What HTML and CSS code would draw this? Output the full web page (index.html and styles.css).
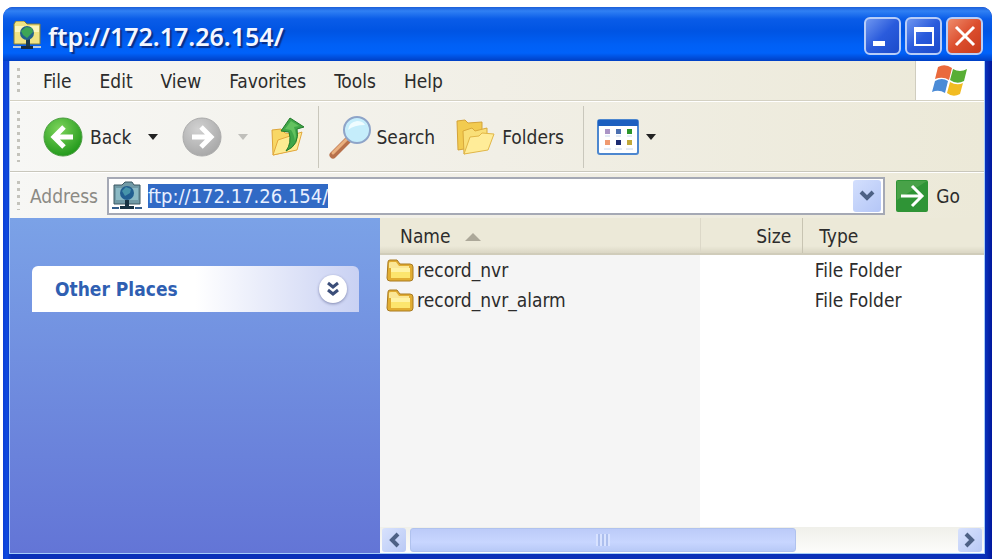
FILE: index.html
```
<!DOCTYPE html>
<html lang="en">
<head>
    <meta charset="UTF-8">
    <meta name="viewport" content="width=device-width, initial-scale=1.0">
    <title>ftp://172.17.26.154/</title>
    <link rel="stylesheet" href="styles.css">
</head>
<body>
    <div class="window">
        <header class="titlebar">
            <svg class="title-icon" width="28" height="30" viewBox="0 0 28 30">
                <path d="M1 3l2-3h8l3 3h13v20H1z" fill="#f0e384" stroke="#85803a"/>
                <path d="M2 5h24v6H2z" fill="#fbf6bd"/>
                <path d="M13 18h4v7h-4z" fill="#1b3a4a"/>
                <circle cx="14" cy="12" r="7" fill="#23628a"/>
                <path d="M8 10l5-4 6 1 1 4-6 6-4-3z" fill="#3da556"/>
                <path d="M0 26h28" stroke="#b7cbe0" stroke-width="2"/>
                <path d="M8 25h12v3H8z" fill="#182c40"/>
            </svg>
            <h1>ftp://172.17.26.154/</h1>
            <div class="window-buttons">
                <button type="button" class="win-btn" aria-label="Minimize">
                    <svg width="36" height="36" viewBox="0 0 36 36"><path d="M8 23h12v5H8z" fill="#fff"/></svg>
                </button>
                <button type="button" class="win-btn" aria-label="Maximize">
                    <svg width="36" height="36" viewBox="0 0 36 36"><path d="M9 12h18v15H9z" fill="none" stroke="#fff" stroke-width="2"/><path d="M8 9h20v5H8z" fill="#fff"/></svg>
                </button>
                <button type="button" class="win-btn close" aria-label="Close">
                    <svg width="36" height="36" viewBox="0 0 36 36"><path d="M9 9l18 18M27 9L9 27" stroke="#fff" stroke-width="3"/></svg>
                </button>
            </div>
        </header>

        <div class="client">
            <nav class="menubar">
                <span class="grip"></span>
                <div class="menus">
                    <button type="button">File</button>
                    <button type="button">Edit</button>
                    <button type="button">View</button>
                    <button type="button">Favorites</button>
                    <button type="button">Tools</button>
                    <button type="button">Help</button>
                </div>
                <div class="flag">
                    <svg width="36" height="34" viewBox="0 0 36 34">
                        <path d="M6 3q7-4 14 1l-3 12q-6-4-14-1z" fill="#ea6a3c"/>
                        <path d="M21 5q7 4 14 0l-3 12q-7 4-14-1z" fill="#58ae35"/>
                        <path d="M3 17q7-4 13 0l-3 12Q7 25 0 28z" fill="#4b8bd6"/>
                        <path d="M18 18q7 4 13 1l-3 11q-7 4-13-1z" fill="#f2bc22"/>
                    </svg>
                </div>
            </nav>

            <div class="toolbar">
                <span class="grip"></span>
                <button type="button" class="tool back">
                    <svg width="40" height="40" viewBox="0 0 40 40">
                        <defs>
                            <radialGradient id="green" cx="0.4" cy="0.3" r="0.7"><stop offset="0" stop-color="#7ed45c"/><stop offset="1" stop-color="#239a1c"/></radialGradient>
                            <radialGradient id="gray" cx="0.4" cy="0.3" r="0.7"><stop offset="0" stop-color="#d2d2d2"/><stop offset="1" stop-color="#a9a9a9"/></radialGradient>
                        </defs>
                        <circle cx="20" cy="20" r="19" fill="url(#green)" stroke="#4a9c40"/>
                        <path d="M30 20H12M21 10L11 20l10 10" fill="none" stroke="#fff" stroke-width="5"/>
                    </svg>
                    Back
                </button>
                <button type="button" class="arrow-btn" aria-label="Back history"><span class="arrow"></span></button>
                <button type="button" class="tool forward" aria-label="Forward" disabled>
                    <svg width="40" height="40" viewBox="0 0 40 40">
                        <circle cx="20" cy="20" r="19" fill="url(#gray)" stroke="#aaa"/>
                        <path d="M10 20h18M19 10l10 10-10 10" fill="none" stroke="#fff" stroke-width="5"/>
                    </svg>
                </button>
                <button type="button" class="arrow-btn" aria-label="Forward history" disabled><span class="arrow"></span></button>
                <button type="button" class="tool up" aria-label="Up">
                    <svg width="36" height="40" viewBox="0 0 36 40">
                        <path d="M2 13l9-1 4 4 9 1v16L3 38z" fill="#f8d765" stroke="#dda53a"/>
                        <path d="M3 38l5-15 24-8-5 18z" fill="#fdeb92" stroke="#e3a83d"/>
                        <path d="M16 34q6-8 3-19l-8-1L20 1l14 9-7 2q3 16-11 22z" fill="#3fa648" stroke="#237b2b"/>
                        <path d="M15 12l6-8 8 5-5 1q3 8 1 14-1-7-4-11z" fill="#63c25f"/>
                    </svg>
                </button>
                <span class="separator"></span>
                <button type="button" class="tool search">
                    <svg width="44" height="44" viewBox="0 0 44 44">
                        <path d="M4 40l15-15" stroke="#b8714b" stroke-width="7" stroke-linecap="round"/>
                        <path d="M4 38l14-14" stroke="#eab07f" stroke-width="3" stroke-linecap="round"/>
                        <circle cx="28" cy="15" r="13" fill="#c5edfb" stroke="#8ea4c8" stroke-width="2"/>
                        <path d="M19 15q1-8 9-9 6 0 8 4-11 0-17 5z" fill="#effcff"/>
                    </svg>
                    Search
                </button>
                <button type="button" class="tool folders">
                    <svg width="40" height="38" viewBox="0 0 40 38">
                        <path d="M2 3l8-1 3 3 14-1v24L3 32z" fill="#f2cb50" stroke="#d4a339"/>
                        <path d="M8 13l9-3 3 3 12-3v18L9 36z" fill="#f9df78" stroke="#d9a93b"/>
                        <path d="M9 36l6-17 9-1 3-3 12 1-6 16z" fill="#ffec98" stroke="#e1b647"/>
                    </svg>
                    Folders
                </button>
                <span class="separator last"></span>
                <button type="button" class="tool views" aria-label="Views">
                    <svg width="42" height="36" viewBox="0 0 42 36">
                        <rect x="1" y="1" width="40" height="34" rx="2" fill="#fff" stroke="#4d87cf" stroke-width="2"/>
                        <path d="M1 1h40v6H1z" fill="#1c5fc0"/>
                        <path d="M8 10h5v5H8z" fill="#aa94c6"/>
                        <path d="M19 10h5v5h-5z" fill="#4b6fb0"/>
                        <path d="M30 10h5v5h-5z" fill="#2b952b"/>
                        <path d="M8 21h5v5H8z" fill="#f09a70"/>
                        <path d="M19 21h5v5h-5z" fill="#1d2c72"/>
                        <path d="M30 21h5v5h-5z" fill="#c0a83a"/>
                        <path d="M7 30h7M18 30h7M29 30h7M8 17h5M19 17h5M30 17h5" stroke="#c8d8ee"/>
                    </svg>
                    <span class="arrow"></span>
                </button>
            </div>

            <form class="addressbar">
                <span class="grip"></span>
                <label for="address">Address</label>
                <div class="combo">
                    <svg width="30" height="30" viewBox="0 0 30 30">
                        <path d="M2 4h8l3-3h7l2 3h6v19H2z" fill="#719aa6" stroke="#3d5963"/>
                        <path d="M4 7h22v12H4z" fill="#8bbac5"/>
                        <circle cx="15" cy="12" r="7" fill="#225f91"/>
                        <path d="M10 10l4-4 5 2-1 4-5 3z" fill="#4694aa"/>
                        <path d="M13 19h4v6h-4zM8 25h14v3H8z" fill="#183343"/>
                        <path d="M0 27h7M23 27h7" stroke="#345d8b" stroke-width="2"/>
                    </svg>
                    <input type="text" id="address" value="ftp://172.17.26.154/" autocomplete="off" spellcheck="false">
                    <button type="button" class="drop" aria-label="Show addresses">
                        <svg width="16" height="12" viewBox="0 0 16 12"><path d="M2 2l6 6 6-6" fill="none" stroke="#4d6185" stroke-width="4"/></svg>
                    </button>
                </div>
                <button type="submit" class="go">
                    <svg width="32" height="32" viewBox="0 0 32 32">
                        <rect width="32" height="32" rx="2" fill="#2f9436"/>
                        <path d="M1 1h30L1 20z" fill="#48a248"/>
                        <path d="M5 16h19M16 6l10 10-10 10" fill="none" stroke="#fff" stroke-width="3"/>
                    </svg>
                    Go
                </button>
            </form>

            <main class="content">
                <aside class="sidebar">
                    <section class="panel">
                        <h2>Other Places</h2>
                        <button type="button" class="expand" aria-label="Expand Other Places">
                            <svg width="14" height="16" viewBox="0 0 14 16"><path d="M2 2l5 4 5-4M2 9l5 4 5-4" fill="none" stroke="#3b4e79" stroke-width="3"/></svg>
                        </button>
                    </section>
                </aside>
                <section class="files">
                    <div class="list">
                        <table>
                            <thead>
                                <tr>
                                    <th class="name">Name <span class="sort"></span></th>
                                    <th class="size">Size</th>
                                    <th class="type">Type</th>
                                </tr>
                            </thead>
                            <tbody>
                                <tr>
                                    <td class="name">
                                        <svg width="28" height="24" viewBox="0 0 28 24">
                                            <path d="M2 4q0-2 2-2h7l3 4h10q3 0 3 3v11q0 3-3 3H4q-3 0-3-3z" fill="#e1ad32" stroke="#a97a21"/>
                                            <path d="M3 5q0-1 2-1h5l3 4h10v2H3z" fill="#fbe795"/>
                                            <path d="M5 10h19v10H5z" fill="#fce56d"/>
                                            <path d="M5 10h19v4H5z" fill="#fff3a4"/>
                                        </svg>record_nvr
                                    </td>
                                    <td class="size"></td>
                                    <td class="type">File Folder</td>
                                </tr>
                                <tr>
                                    <td class="name">
                                        <svg width="28" height="24" viewBox="0 0 28 24">
                                            <path d="M2 4q0-2 2-2h7l3 4h10q3 0 3 3v11q0 3-3 3H4q-3 0-3-3z" fill="#e1ad32" stroke="#a97a21"/>
                                            <path d="M3 5q0-1 2-1h5l3 4h10v2H3z" fill="#fbe795"/>
                                            <path d="M5 10h19v10H5z" fill="#fce56d"/>
                                            <path d="M5 10h19v4H5z" fill="#fff3a4"/>
                                        </svg>record_nvr_alarm
                                    </td>
                                    <td class="size"></td>
                                    <td class="type">File Folder</td>
                                </tr>
                            </tbody>
                        </table>
                    </div>
                    <div class="scrollbar">
                        <button type="button" class="scroll-btn" aria-label="Scroll left">
                            <svg width="12" height="16" viewBox="0 0 12 16"><path d="M10 2L4 8l6 6" fill="none" stroke="#4d6185" stroke-width="4"/></svg>
                        </button>
                        <div class="track">
                            <div class="thumb"><span class="ridges"></span></div>
                        </div>
                        <button type="button" class="scroll-btn" aria-label="Scroll right">
                            <svg width="12" height="16" viewBox="0 0 12 16"><path d="M2 2l6 6-6 6" fill="none" stroke="#4d6185" stroke-width="4"/></svg>
                        </button>
                    </div>
                </section>
            </main>
        </div>
    </div>

    <script>
        // the address is selected when the window opens
        var address = document.getElementById('address');
        address.focus();
        address.select();
    </script>
</body>
</html>
```
FILE: styles.css
```
* {
    box-sizing: border-box;
}

body {
    font-family: "DejaVu Sans Condensed", "DejaVu Sans", sans-serif;
    font-size: 19px;
    color: #2c2c2c;
    margin: 0;
    padding: 7px 0 0 3px;
    min-height: 100vh;
    display: flex;
    background-color: #fff;
}

button {
    font: inherit;
    color: inherit;
    background: none;
    border: none;
    padding: 0;
}

svg {
    display: block;
    flex: none;
}

.window {
    flex: 1;
    display: flex;
    flex-direction: column;
    padding: 0 7px 5px 6px;
    border-radius: 10px 10px 0 0;
    background: linear-gradient(to right, #0a3fd6, #0f4adf 4px, #0a30b8 8px, #0a30b8 calc(100% - 6px), #00179c);
    overflow: hidden;
}

/* title bar */
.titlebar {
    display: flex;
    align-items: center;
    height: 54px;
    margin: 0 -7px 0 -6px;
    padding: 4px 9px 0 10px;
    background: linear-gradient(#1d5fd8, #3080f4 4px, #0a5ce8 12px, #0054e3 24px, #0060f6 38px, #0062fa 46px, #003fc4);
}

.titlebar h1 {
    flex: 1;
    margin: 0 0 0 7px;
    font-family: "Noto Sans", sans-serif;
    font-size: 25px;
    font-weight: 600;
    line-height: 32px;
    color: #f4f7ff;
    text-shadow: 2px 2px 1px #0a2f87;
}

.window-buttons {
    display: flex;
    gap: 4px;
}

.win-btn {
    width: 37px;
    height: 38px;
    border: 2px solid #b8cdf8;
    border-radius: 6px;
    background: linear-gradient(135deg, #6e96f0, #2a5bdc 50%, #1c4bcb);
    display: flex;
    align-items: center;
    justify-content: center;
}

.win-btn.close {
    background: linear-gradient(135deg, #ee8c6c, #dc4e2e 50%, #c83a1c);
}

/* bars */
.client {
    flex: 1;
    display: flex;
    flex-direction: column;
    border: 1px solid #a5cdfa;
    border-top: none;
    background-color: #ece9d8;
}

.menubar,
.toolbar,
.addressbar {
    display: flex;
    align-items: center;
    background: linear-gradient(to right, #f7f7f5, #f1efe6 50%, #ece9d8);
}

.grip {
    width: 3px;
    margin-left: 7px;
    align-self: stretch;
    background: repeating-linear-gradient(#c4c3bc 0 3px, transparent 3px 7px);
}

.menubar {
    height: 40px;
    border-bottom: 1px solid #d4d1c3;
}

.menubar .grip {
    margin-top: 7px;
    margin-bottom: 7px;
}

.menus {
    flex: 1;
    display: flex;
    gap: 28px;
    padding-left: 23px;
}

.flag {
    align-self: stretch;
    width: 69px;
    display: flex;
    align-items: center;
    justify-content: center;
    background-color: #fff;
    border-left: 1px solid #d0cdbf;
}

.toolbar {
    height: 71px;
    border-top: 1px solid #fff;
    border-bottom: 1px solid #c9c7bc;
}

.toolbar .grip {
    margin-top: 9px;
    margin-bottom: 9px;
}

.tool {
    display: flex;
    align-items: center;
    gap: 7px;
}

.back {
    margin-left: 23px;
}

.forward {
    margin-left: 24px;
}

.up {
    margin-left: 22px;
}

.search {
    gap: 4px;
}

.folders {
    margin-left: 20px;
}

.arrow {
    display: block;
    border: 5px solid transparent;
    border-top: 6px solid #222;
    border-bottom: none;
}

.arrow-btn {
    margin-left: 16px;
}

.arrow-btn:disabled {
    opacity: 0.25;
}

.separator {
    width: 1px;
    height: 62px;
    margin: 0 10px 0 12px;
    background-color: #c9c7bc;
}

.separator.last {
    margin: 0 13px 0 19px;
}

.addressbar {
    height: 46px;
    padding-right: 24px;
    border-top: 1px solid #fff;
}

.addressbar .grip {
    margin-top: 8px;
    margin-bottom: 8px;
}

.addressbar label {
    margin: 0 9px 0 10px;
    color: #8b8a84;
}

.combo {
    flex: 1;
    display: flex;
    align-items: center;
    height: 38px;
    padding: 0 2px 0 3px;
    border: 2px solid #a5a9b5;
    background-color: #fff;
}

.combo input {
    flex: 1;
    min-width: 0;
    height: 24px;
    margin-left: 6px;
    padding: 0;
    border: none;
    outline: none;
    font: inherit;
    font-size: 20px;
    color: #222;
    caret-color: transparent;
}

.combo input::selection {
    background-color: #316ac5;
    color: #e8f0ff;
}

.drop {
    width: 28px;
    height: 32px;
    display: flex;
    align-items: center;
    justify-content: center;
    border-radius: 3px;
    background: linear-gradient(135deg, #d3dffd, #b4c6f6);
}

.go {
    display: flex;
    align-items: center;
    gap: 8px;
    margin-left: 11px;
}

/* side panel */
.content {
    flex: 1;
    display: flex;
}

.sidebar {
    width: 38%;
    padding: 48px 21px 0 22px;
    background: linear-gradient(#7ba2e7, #6375d6);
}

.panel {
    display: flex;
    align-items: center;
    height: 46px;
    padding: 0 12px 0 23px;
    border-radius: 6px 6px 0 0;
    background: linear-gradient(to right, #fff 50%, #c9d1f3);
}

.panel h2 {
    flex: 1;
    margin: 0;
    font-size: 19px;
    line-height: 24px;
    color: #2f5fb2;
}

.expand {
    width: 28px;
    height: 28px;
    display: flex;
    align-items: center;
    justify-content: center;
    border-radius: 50%;
    background-color: #fff;
    box-shadow: 0 1px 3px #8088b0;
}

/* file list */
.files {
    flex: 1;
    display: flex;
    flex-direction: column;
}

.list {
    flex: 1;
    background: linear-gradient(to right, #f5f5f5 53%, #fff 53%);
}

table {
    width: 100%;
    table-layout: fixed;
    border-collapse: collapse;
}

th {
    height: 36px;
    padding: 0;
    font-weight: normal;
    text-align: left;
    background: linear-gradient(#ece9d8 28px, #dad6c4);
    border-bottom: 2px solid #d0ccba;
}

td {
    height: 30px;
    padding: 0;
    white-space: nowrap;
}

th.name {
    width: 53%;
    padding-left: 20px;
}

td.name {
    display: flex;
    align-items: center;
    gap: 3px;
    padding-left: 6px;
}

th.size {
    width: 17%;
    padding-right: 11px;
    text-align: right;
    border-left: 1px solid #dcd8c8;
    border-right: 1px solid #c8c4b2;
}

th.type {
    padding-left: 16px;
}

td.type {
    padding-left: 12px;
}

.sort {
    display: inline-block;
    margin-left: 9px;
    border: 8px solid transparent;
    border-bottom: 8px solid #aca899;
    border-top: none;
    vertical-align: 2px;
}

.scrollbar {
    display: flex;
    height: 26px;
    padding: 1px 2px;
    background: linear-gradient(#f0f0ea, #fdfdfb);
}

.scroll-btn {
    width: 24px;
    display: flex;
    align-items: center;
    justify-content: center;
    border-radius: 3px;
    background: linear-gradient(135deg, #d8e2fd, #b9c9f5);
}

.track {
    flex: 1;
    padding: 0 4px;
}

.thumb {
    width: 71%;
    height: 24px;
    display: flex;
    align-items: center;
    justify-content: center;
    border: 1px solid #b0c2ee;
    border-radius: 3px;
    background: linear-gradient(#bccbf8, #c8d6ff 60%, #b8c9f7);
}

.ridges {
    width: 14px;
    height: 12px;
    background: repeating-linear-gradient(to right, #d8e2ff 0 2px, #adbfee 2px 4px);
}
```
